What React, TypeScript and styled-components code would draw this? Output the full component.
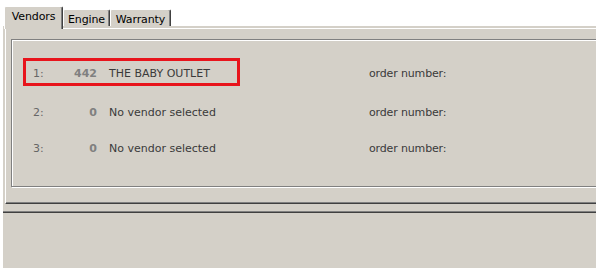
import React from 'react';
import styled, { createGlobalStyle } from 'styled-components';

const GlobalStyle = createGlobalStyle`
  html, body {
    margin: 0;
    padding: 0;
    background: #ffffff;
  }
  body {
    font-family: "DejaVu Sans", Tahoma, sans-serif;
    font-size: 11px;
  }
`;

const Window = styled.div`
  width: 593px;
  height: 100vh;
  margin-left: 3px;
  display: flex;
  flex-direction: column;
  overflow: hidden;
`;

const TabStrip = styled.div`
  height: 26px;
  flex: none;
  display: flex;
  align-items: flex-end;
  padding-left: 1px;
  background: #ffffff;
`;

const Tab = styled.div<{ $active?: boolean; $width: number }>`
  position: relative;
  z-index: ${(p) => (p.$active ? 1 : 0)};
  box-sizing: border-box;
  width: ${(p) => p.$width}px;
  height: ${(p) => (p.$active ? 23 : 17)}px;
  margin-bottom: ${(p) => (p.$active ? -3 : 0)}px;
  padding-top: 3px;
  background: #d4d0c8;
  border-top: 1px solid #ffffff;
  border-left: 1px solid #ffffff;
  border-right: 1px solid #404040;
  border-top-left-radius: 2px;
  border-top-right-radius: 2px;
  box-shadow: inset -1px 0 0 #808080;
  color: #000000;
  line-height: 13px;
  text-align: center;
  letter-spacing: -0.1px;
`;

const Form = styled.div`
  flex: 1;
  display: flex;
  flex-direction: column;
  padding-top: 2px;
  background: #d4d0c8;
`;

const TabPage = styled.div`
  margin-left: 2px;
  padding: 10px 0 16px 5px;
  border-top: 1px solid #ffffff;
  border-left: 1px solid #ffffff;
  border-bottom: 1px solid #404040;
  box-shadow: inset 0 -1px 0 #808080;
`;

const GroupBox = styled.div`
  box-sizing: border-box;
  height: 148px;
  padding: 11px 0 0 11px;
  border: 1px solid #808080;
  border-right: none;
  box-shadow: inset 1px 1px 0 #ffffff, 1px 1px 0 #ffffff;
`;

const Row = styled.div<{ $tall?: boolean }>`
  height: ${(p) => (p.$tall ? 42 : 36)}px;
  display: flex;
  align-items: center;
`;

const VendorCell = styled.div<{ $highlighted?: boolean }>`
  box-sizing: border-box;
  width: 217px;
  height: 28px;
  display: flex;
  align-items: center;
  padding: 3px 0 0 7px;
  border: 3px solid ${(p) => (p.$highlighted ? '#e8141c' : 'transparent')};
  line-height: 13px;
`;

const Index = styled.span`
  width: 40px;
  color: #666666;
`;

const Count = styled.span`
  width: 24px;
  text-align: right;
  font-weight: bold;
  color: #808080;
`;

const VendorName = styled.span`
  margin-left: 12px;
  color: #3a3a3a;
  white-space: nowrap;
`;

const OrderLabel = styled.span`
  margin-left: 129px;
  padding-top: 3px;
  line-height: 13px;
  color: #3a3a3a;
  letter-spacing: -0.15px;
`;

const Separator = styled.div`
  height: 0;
  margin-top: 7px;
  border-top: 1px solid #808080;
  border-bottom: 1px solid #404040;
`;

const vendors = [
  { index: 1, count: 442, name: 'THE BABY OUTLET', selected: true },
  { index: 2, count: 0, name: 'No vendor selected', selected: false },
  { index: 3, count: 0, name: 'No vendor selected', selected: false },
];

const tabs = [
  { label: 'Vendors', width: 59, active: true },
  { label: 'Engine', width: 47, active: false },
  { label: 'Warranty', width: 61, active: false },
];

const App: React.FC = () => {
  return (
    <>
      <GlobalStyle />
      <Window>
        <TabStrip>
          {tabs.map((t) => (
            <Tab key={t.label} $active={t.active} $width={t.width}>
              {t.label}
            </Tab>
          ))}
        </TabStrip>
        <Form>
          <TabPage>
            <GroupBox>
              {vendors.map((v) => (
                <Row key={v.index} $tall={v.selected}>
                  <VendorCell $highlighted={v.selected}>
                    <Index>{v.index}:</Index>
                    <Count>{v.count}</Count>
                    <VendorName>{v.name}</VendorName>
                  </VendorCell>
                  <OrderLabel>order number:</OrderLabel>
                </Row>
              ))}
            </GroupBox>
          </TabPage>
          <Separator />
        </Form>
      </Window>
    </>
  );
};

export default App;
